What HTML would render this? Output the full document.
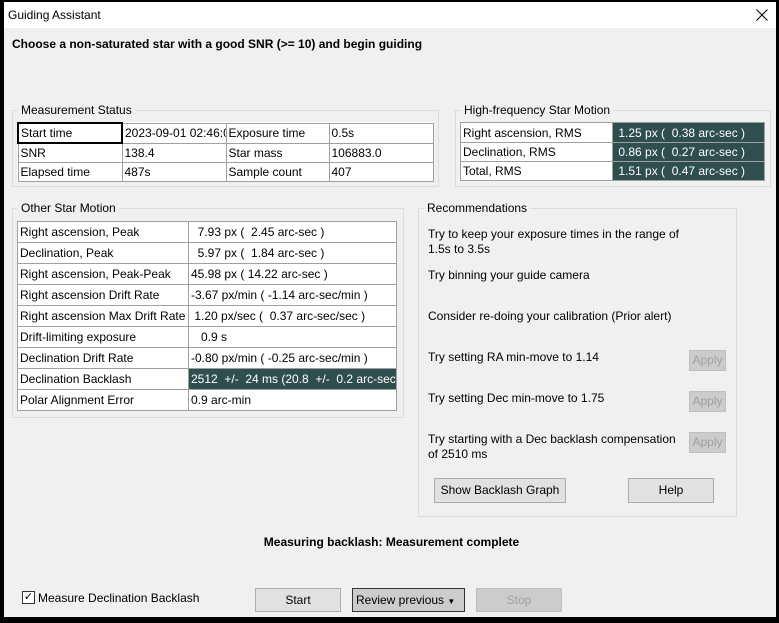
<!DOCTYPE html>
<html><head><meta charset="utf-8"><style>
*{margin:0;padding:0;box-sizing:border-box}
body{width:779px;height:623px;background:#000;position:relative;overflow:hidden;font-family:"Liberation Sans",sans-serif;font-size:12px;color:#000}
.a{position:absolute;white-space:nowrap}
#win{position:absolute;left:4px;top:2px;width:772px;height:615px;background:#f0f0f0}
#tb{position:absolute;left:4px;top:2px;width:772px;height:26px;background:#fff}
.gb{position:absolute;border:1px solid #dcdcdc}
.gl{position:absolute;background:#f0f0f0;padding:0 3px;font-size:12px;line-height:14px}
table{position:absolute;border-collapse:collapse;background:#fff;table-layout:fixed}
td{border:1px solid #a0a0a0;padding:0 2px;overflow:hidden;white-space:nowrap;font-size:12px}
.d{background:#2f4f4f;color:#fff}
.btn{position:absolute;background:#e1e1e1;border:1px solid #adadad;text-align:center;font-size:12px}
.dis{background:#cccccc;border-color:#bfbfbf;color:#a0a0a0}
</style></head><body>
<div id="win"></div>
<div id="tb"></div>
<div class="a" style="left:8px;top:8px;font-size:12px">Guiding Assistant</div>
<svg class="a" style="left:756px;top:9px" width="12" height="12" viewBox="0 0 12 12"><path d="M0.5 0.5L11.5 11.5M11.5 0.5L0.5 11.5" stroke="#000" stroke-width="1"/></svg>
<div class="a" style="left:12px;top:37px;font-weight:bold;font-size:12px">Choose a non-saturated star with a good SNR (&gt;= 10) and begin guiding</div>

<div class="gb" style="left:12px;top:110px;width:427px;height:77px"></div>
<div class="gl" style="left:18px;top:103px">Measurement Status</div>
<table style="left:17px;top:122px;width:415px">
<colgroup><col style="width:104px"><col style="width:104px"><col style="width:103px"><col style="width:104px"></colgroup>
<tr style="height:20px"><td style="border:2px solid #000">Start time</td><td>2023-09-01 02:46:00</td><td>Exposure time</td><td>0.5s</td></tr>
<tr style="height:19px"><td>SNR</td><td>138.4</td><td>Star mass</td><td>106883.0</td></tr>
<tr style="height:19px"><td>Elapsed time</td><td>487s</td><td>Sample count</td><td>407</td></tr>
</table>

<div class="gb" style="left:455px;top:110px;width:316px;height:77px"></div>
<div class="gl" style="left:461px;top:103px">High-frequency Star Motion</div>
<table style="left:460px;top:122px;width:304px">
<colgroup><col style="width:152px"><col style="width:152px"></colgroup>
<tr style="height:20px"><td>Right ascension, RMS</td><td class="d">&nbsp;1.25 px (&nbsp; 0.38 arc-sec )</td></tr>
<tr style="height:19px"><td>Declination, RMS</td><td class="d">&nbsp;0.86 px (&nbsp; 0.27 arc-sec )</td></tr>
<tr style="height:19px"><td>Total, RMS</td><td class="d">&nbsp;1.51 px (&nbsp; 0.47 arc-sec )</td></tr>
</table>

<div class="gb" style="left:12px;top:208px;width:392px;height:210px"></div>
<div class="gl" style="left:18px;top:201px">Other Star Motion</div>
<table style="left:17px;top:221px;width:379px">
<colgroup><col style="width:171px"><col style="width:208px"></colgroup>
<tr style="height:21px"><td>Right ascension, Peak</td><td>&nbsp; 7.93 px (&nbsp; 2.45 arc-sec )</td></tr>
<tr style="height:21px"><td>Declination, Peak</td><td>&nbsp; 5.97 px (&nbsp; 1.84 arc-sec )</td></tr>
<tr style="height:21px"><td>Right ascension, Peak-Peak</td><td>45.98 px ( 14.22 arc-sec )</td></tr>
<tr style="height:21px"><td>Right ascension Drift Rate</td><td>-3.67 px/min ( -1.14 arc-sec/min )</td></tr>
<tr style="height:21px"><td>Right ascension Max Drift Rate</td><td>&nbsp;1.20 px/sec (&nbsp; 0.37 arc-sec/sec )</td></tr>
<tr style="height:21px"><td>Drift-limiting exposure</td><td>&nbsp;&nbsp; 0.9 s</td></tr>
<tr style="height:21px"><td>Declination Drift Rate</td><td>-0.80 px/min ( -0.25 arc-sec/min )</td></tr>
<tr style="height:21px"><td>Declination Backlash</td><td class="d">2512&nbsp; +/-&nbsp; 24 ms (20.8&nbsp; +/-&nbsp; 0.2 arc-sec)</td></tr>
<tr style="height:21px"><td>Polar Alignment Error</td><td>0.9 arc-min</td></tr>
</table>

<div class="gb" style="left:418px;top:208px;width:319px;height:309px"></div>
<div class="gl" style="left:424px;top:201px">Recommendations</div>
<div class="a" style="left:428px;top:227px;line-height:15px">Try to keep your exposure times in the range of<br>1.5s to 3.5s</div>
<div class="a" style="left:428px;top:268px">Try binning your guide camera</div>
<div class="a" style="left:428px;top:309px">Consider re-doing your calibration (Prior alert)</div>
<div class="a" style="left:428px;top:350px">Try setting RA min-move to 1.14</div>
<div class="a" style="left:428px;top:391px">Try setting Dec min-move to 1.75</div>
<div class="a" style="left:428px;top:432px;line-height:15px">Try starting with a Dec backlash compensation<br>of 2510 ms</div>
<div class="btn dis" style="left:689px;top:350px;width:37px;height:21px;line-height:19px">Apply</div>
<div class="btn dis" style="left:689px;top:391px;width:37px;height:21px;line-height:19px">Apply</div>
<div class="btn dis" style="left:689px;top:432px;width:37px;height:21px;line-height:19px">Apply</div>
<div class="btn" style="left:434px;top:478px;width:132px;height:25px;line-height:23px">Show Backlash Graph</div>
<div class="btn" style="left:628px;top:478px;width:86px;height:25px;line-height:23px">Help</div>

<div class="a" style="left:0;width:779px;text-align:center;top:535px;font-weight:bold;padding-left:4px">Measuring backlash: Measurement complete</div>

<div class="a" style="left:22px;top:591px;width:13px;height:13px;border:1px solid #333;background:#fff;font-size:11px;line-height:11px;text-align:center">✓</div>
<div class="a" style="left:38px;top:591px">Measure Declination Backlash</div>
<div class="btn" style="left:255px;top:588px;width:86px;height:24px;line-height:22px">Start</div>
<div class="btn" style="left:352px;top:588px;width:113px;height:24px;line-height:22px;background:#ccc;border-color:#333;text-align:left;padding-left:3px">Review previous <span style="font-size:8px">▼</span></div>
<div class="btn dis" style="left:476px;top:588px;width:86px;height:24px;line-height:22px">Stop</div>
</body></html>
